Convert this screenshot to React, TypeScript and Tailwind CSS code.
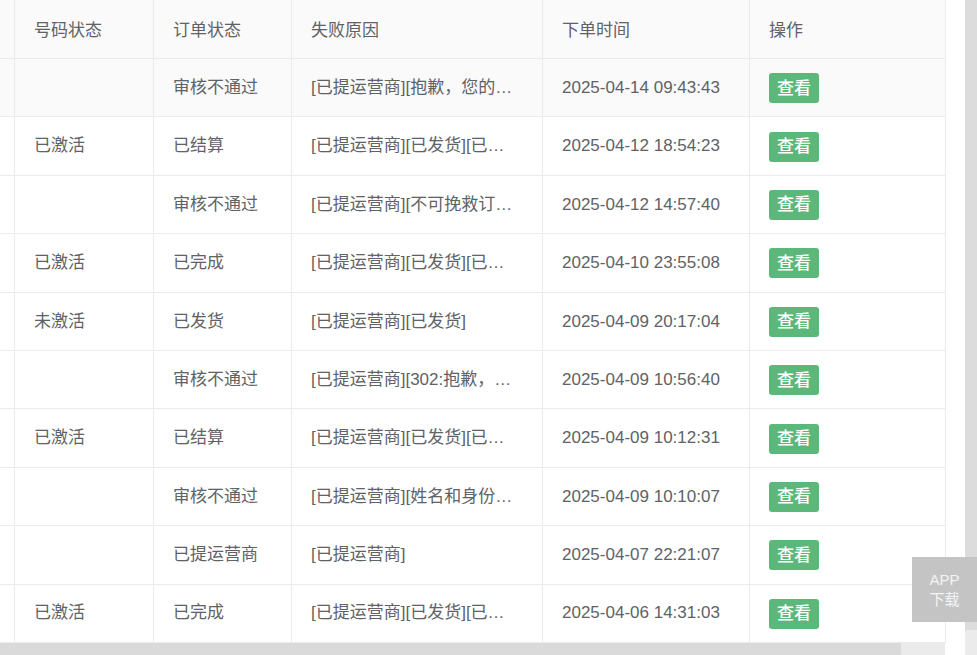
import React from 'react';

interface OrderRow {
  numberStatus: string;
  orderStatus: string;
  reason: string;
  time: string;
}

const rows: OrderRow[] = [
  { numberStatus: '', orderStatus: '审核不通过', reason: '[已提运营商][抱歉，您的…', time: '2025-04-14 09:43:43' },
  { numberStatus: '已激活', orderStatus: '已结算', reason: '[已提运营商][已发货][已…', time: '2025-04-12 18:54:23' },
  { numberStatus: '', orderStatus: '审核不通过', reason: '[已提运营商][不可挽救订…', time: '2025-04-12 14:57:40' },
  { numberStatus: '已激活', orderStatus: '已完成', reason: '[已提运营商][已发货][已…', time: '2025-04-10 23:55:08' },
  { numberStatus: '未激活', orderStatus: '已发货', reason: '[已提运营商][已发货]', time: '2025-04-09 20:17:04' },
  { numberStatus: '', orderStatus: '审核不通过', reason: '[已提运营商][302:抱歉，…', time: '2025-04-09 10:56:40' },
  { numberStatus: '已激活', orderStatus: '已结算', reason: '[已提运营商][已发货][已…', time: '2025-04-09 10:12:31' },
  { numberStatus: '', orderStatus: '审核不通过', reason: '[已提运营商][姓名和身份…', time: '2025-04-09 10:10:07' },
  { numberStatus: '', orderStatus: '已提运营商', reason: '[已提运营商]', time: '2025-04-07 22:21:07' },
  { numberStatus: '已激活', orderStatus: '已完成', reason: '[已提运营商][已发货][已…', time: '2025-04-06 14:31:03' },
];

const cell = 'flex items-center pl-[19px] border-l border-[#ebebeb] whitespace-nowrap overflow-hidden';
const head = `${cell} pt-[3px]`;

export default function App() {
  return (
    <div
      className="relative flex w-[977px] h-[655px] overflow-hidden bg-white text-[#606266] text-[17px]"
      style={{ fontFamily: '"Liberation Sans", "Noto Sans CJK SC", sans-serif' }}
    >
      <div className="flex flex-col w-[965px]">
        {/* table */}
        <div className="flex flex-col w-[946px] h-[643px] border-r border-[#ebebeb]">
          <div className="flex h-[59px] bg-[#fafafa] border-b border-[#ebebeb]">
            <div className="w-[14px]" />
            <div className={`${head} w-[139px]`}>号码状态</div>
            <div className={`${head} w-[138px]`}>订单状态</div>
            <div className={`${head} w-[251px]`}>失败原因</div>
            <div className={`${head} w-[207px]`}>下单时间</div>
            <div className={`${head} w-[196px]`}>操作</div>
          </div>
          {rows.map((r, i) => (
            <div
              key={i}
              className={`flex h-[58.4px] border-b border-[#ebebeb] ${i === 0 ? 'bg-[#fafafa]' : 'bg-white'}`}
            >
              <div className="w-[14px]" />
              <div className={`${cell} w-[139px]`}>{r.numberStatus}</div>
              <div className={`${cell} w-[138px]`}>{r.orderStatus}</div>
              <div className={`${cell} w-[251px]`}>{r.reason}</div>
              <div className={`${cell} w-[207px]`}>{r.time}</div>
              <div className={`${cell} w-[196px]`}>
                <button className="w-[50px] h-[30px] mt-[1px] rounded-[3px] bg-[#5cb87a] text-white text-[17px] font-medium leading-none">
                  查看
                </button>
              </div>
            </div>
          ))}
        </div>
        {/* horizontal scrollbar */}
        <div className="flex w-[945px] h-[12px] bg-[#ebebeb]">
          <div className="w-[901px] h-full bg-[#dadada]" />
        </div>
      </div>
      {/* vertical scrollbar */}
      <div className="flex flex-col w-[12px] h-full bg-[#ebebeb]">
        <div className="h-[630px] bg-[#dcdcdc]" />
      </div>

      {/* floating APP download */}
      <div className="absolute right-0 top-[557px] w-[65px] h-[65px] bg-[#c4c4c4] flex flex-col items-center justify-center text-white/80 text-[15px] leading-[20px]">
        <span>APP</span>
        <span>下载</span>
      </div>
    </div>
  );
}
